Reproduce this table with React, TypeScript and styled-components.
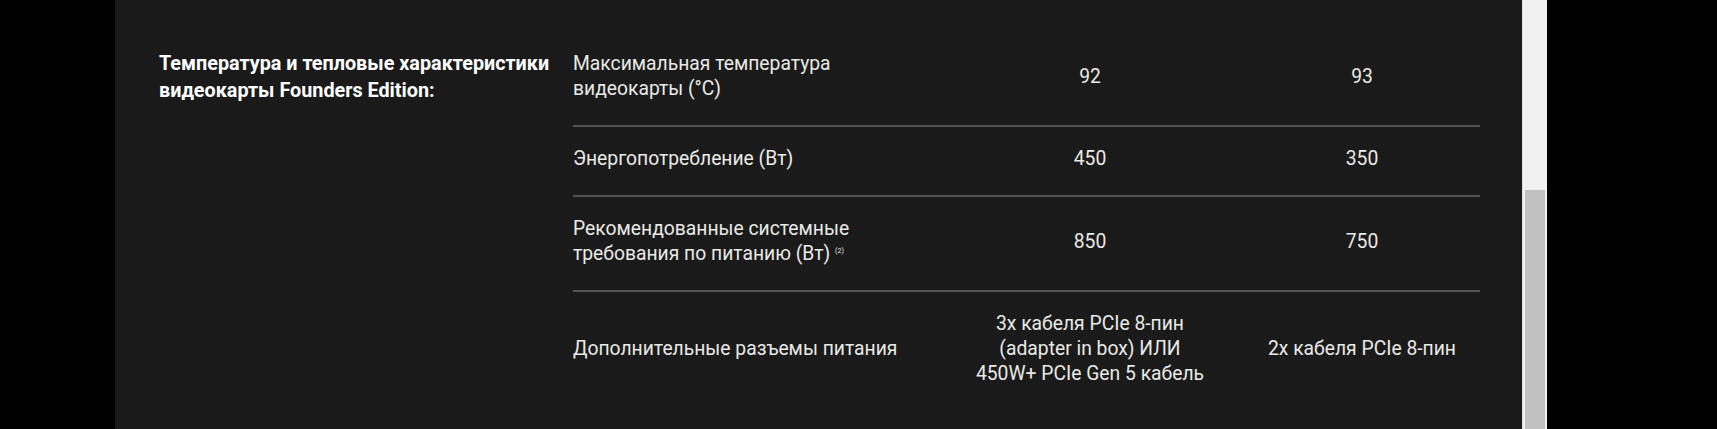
import React from "react";
import styled, { createGlobalStyle } from "styled-components";

const GlobalStyle = createGlobalStyle`
  html, body {
    margin: 0;
    padding: 0;
    background: #000;
  }
  body {
    font-family: Roboto, "Liberation Sans", sans-serif;
    -webkit-font-smoothing: antialiased;
  }
`;

const Page = styled.div`
  display: flex;
  width: 1717px;
  height: 429px;
  overflow: hidden;
  background: #000;
`;

const Gutter = styled.div<{ $w: number }>`
  flex: 0 0 ${(p) => p.$w}px;
`;

const Panel = styled.section`
  flex: 0 0 1407px;
  display: flex;
  padding: 32px 0 0 44px;
  box-sizing: border-box;
  background: #1a1a1a;
  color: #e9e9e6;
`;

const Heading = styled.h3`
  flex: 0 0 414px;
  margin: 18px 0 0;
  font-size: 19.8px;
  line-height: 27px;
  font-weight: 700;
  color: #fff;
`;

const Table = styled.div`
  width: 907px;
  display: flex;
  flex-direction: column;
`;

const Row = styled.div<{ $last?: boolean }>`
  display: grid;
  grid-template-columns: 363px 236px 236px;
  column-gap: 36px;
  align-items: center;
  padding: 19px 0 24px;
  border-bottom: ${(p) => (p.$last ? "none" : "2px solid #525252")};
  font-size: 19.3px;
  line-height: 25px;
`;

const Label = styled.div`
  text-align: left;
  white-space: nowrap;
`;

const Value = styled.div`
  text-align: center;
  white-space: nowrap;
`;

const Note = styled.sup`
  font-size: 7px;
  vertical-align: 7px;
  line-height: 0;
`;

const Scrollbar = styled.div`
  flex: 0 0 25px;
  display: flex;
  flex-direction: column;
  padding-top: 190px;
  box-sizing: border-box;
  background: #f1f1f1;
  border-left: 1px solid #e0e0e0;
`;

const Thumb = styled.div`
  flex: 1;
  margin: 0 2px 0 2px;
  background: #c1c1c1;
`;

type SpecRow = {
  label: React.ReactNode;
  values: React.ReactNode[];
};

const rows: SpecRow[] = [
  {
    label: (
      <>
        Максимальная температура
        <br />
        видеокарты (°C)
      </>
    ),
    values: ["92", "93"],
  },
  { label: "Энергопотребление (Вт)", values: ["450", "350"] },
  {
    label: (
      <>
        Рекомендованные системные
        <br />
        требования по питанию (Вт) <Note>(2)</Note>
      </>
    ),
    values: ["850", "750"],
  },
  {
    label: "Дополнительные разъемы питания",
    values: [
      <>
        3x кабеля PCIe 8-пин
        <br />
        (adapter in box) ИЛИ
        <br />
        450W+ PCIe Gen 5 кабель
      </>,
      "2x кабеля PCIe 8-пин",
    ],
  },
];

export default function App() {
  return (
    <Page>
      <GlobalStyle />
      <Gutter $w={115} />
      <Panel>
        <Heading>
          Температура и тепловые характеристики
          <br />
          видеокарты Founders Edition:
        </Heading>
        <Table>
          {rows.map((row, i) => (
            <Row key={i} $last={i === rows.length - 1}>
              <Label>{row.label}</Label>
              {row.values.map((v, j) => (
                <Value key={j}>{v}</Value>
              ))}
            </Row>
          ))}
        </Table>
      </Panel>
      <Scrollbar>
        <Thumb />
      </Scrollbar>
    </Page>
  );
}
